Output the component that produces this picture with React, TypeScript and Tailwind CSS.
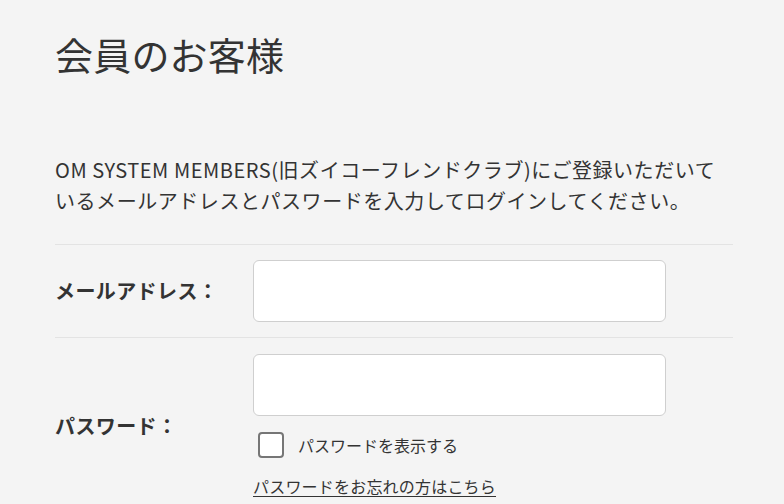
import { useState } from "react";

export default function App() {
  const [showPassword, setShowPassword] = useState(false);

  return (
    <div
      className="min-h-[504px] bg-[#f4f4f4] text-[#333]"
      style={{ fontFamily: '"Noto Sans CJK JP", "Noto Sans", sans-serif' }}
    >
      <div className="w-[678px] pl-[55px] box-content">
        <h1 className="pt-[25px] text-[38px] leading-[57px] font-normal tracking-[0.2px]">
          会員のお客様
        </h1>

        <p className="mt-[72px] text-[20px] leading-[31px] tracking-[0.55px]">
          OM SYSTEM MEMBERS(旧ズイコーフレンドクラブ)にご登録いただいて
          <br />
          いるメールアドレスとパスワードを入力してログインしてください。
        </p>

        <div className="mt-[28px] border-t border-[#e3e3e3]">
          <div className="flex items-center py-[15px]">
            <label className="w-[198px] text-[20px] font-bold tracking-[0.4px]">メールアドレス：</label>
            <input
              type="email"
              className="h-[62px] w-[413px] rounded-[6px] border border-[#cfcfcf] bg-white px-3 outline-none"
            />
          </div>

          <div className="flex items-center border-t border-[#e3e3e3] pt-[16px] pb-[8px]">
            <label className="w-[198px] text-[20px] font-bold tracking-[0.4px]">パスワード：</label>
            <div className="flex flex-col">
              <input
                type={showPassword ? "text" : "password"}
                className="h-[62px] w-[413px] rounded-[6px] border border-[#cfcfcf] bg-white px-3 outline-none"
              />
              <label className="mt-[16px] flex items-center cursor-pointer">
                <span
                  onClick={() => setShowPassword(!showPassword)}
                  className="ml-[5px] h-[26px] w-[26px] rounded-[4px] border-2 border-[#767676] bg-white"
                />
                <span className="ml-[14px] text-[16px] leading-[26px]">パスワードを表示する</span>
              </label>
              <a href="#" className="mt-[16px] text-[16px] leading-[24px] tracking-[0.2px] underline underline-offset-[3px] text-[#333]">
                パスワードをお忘れの方はこちら
              </a>
            </div>
          </div>
        </div>
      </div>
    </div>
  );
}
